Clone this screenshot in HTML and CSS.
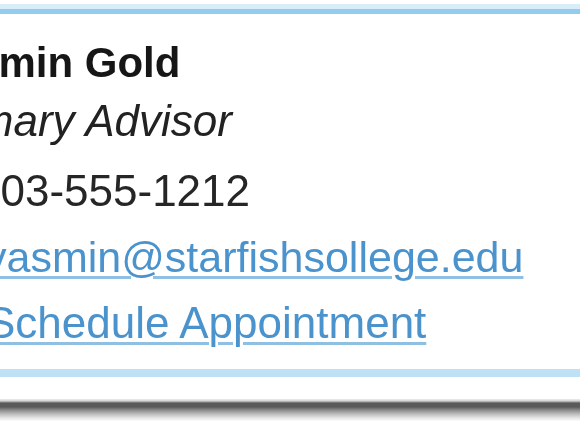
FILE: index.html
```html
<!DOCTYPE html>
<html lang="en">
<head>
	<meta charset="UTF-8">
	<title>Advisor Card</title>
	<link rel="stylesheet" href="styles.css">
</head>
<body>

	<div class="card">
		<div class="who">
			<div class="name">Yasmin Gold</div>
			<div class="role">Primary Advisor</div>
		</div>
		<div class="contact">
			<div class="phone">503-555-1212</div>
			<div class="mail"><a href="#" class="link">yasmin@starfishsollege.edu</a></div>
			<div class="appt"><a href="#" class="link">Schedule Appointment</a></div>
		</div>
	</div><!-- .card -->

	<div class="shade"></div>

</body>
</html>
```

FILE: styles.css
```css
html, body{ margin: 0; padding: 0; background: #fff; overflow: hidden;}
body{ padding-top: 4px; width: 580px; height: 435px; font-family: "Liberation Sans", Arial, sans-serif; font-size: 42px;}

.card{ margin: 0 -20px; padding: 25px 0 13px; background: #fff; border-top: 5px solid #d9edf9; border-bottom: 8px solid #bfe1f5; box-shadow: inset 0 5px 0 #92cdf0;}
.card .who, .card .contact{ filter: blur(0.5px);}

.who{ line-height: 58px;}
.name{ margin-left: -54px; font-weight: bold; color: #161616;}
.role{ margin-left: -57px; font-style: italic; color: #222; font-size: 44px;}

.contact{ margin-top: 8px; line-height: 66px; font-size: 44px;}
.phone{ margin-left: -4px; color: #262626;}
.mail{ margin-left: 5px; font-size: 43px;}
.appt{ margin-left: 6px;}
.link{ color: #4a93cd; text-decoration: underline; text-decoration-color: #8fc0e2; text-decoration-thickness: 3px; text-underline-offset: 4px;}

.shade{ margin-top: 22px; height: 22px; background: linear-gradient(#ececec 0, #d0d0d0 2px, #5a5a5a 4px, #5a5a5a 8px, #8a8a8a 11px, #bcbcbc 15px, #e6e6e6 19px, #fbfbfb 22px);}
```
